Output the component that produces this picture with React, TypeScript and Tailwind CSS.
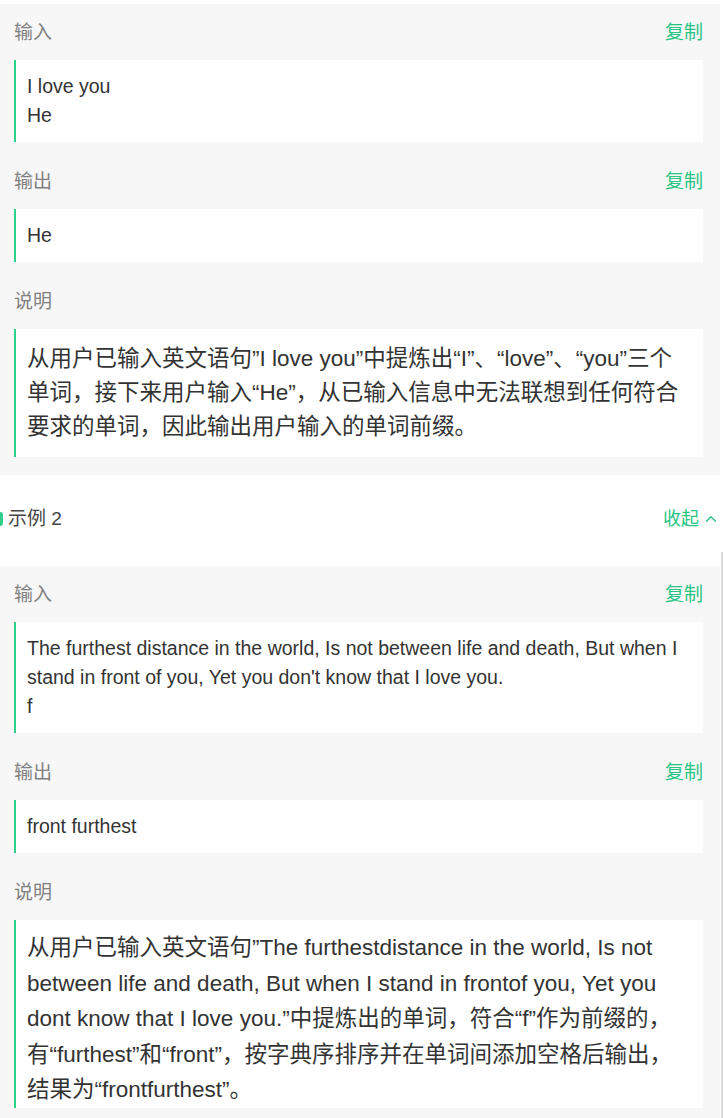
import React from "react";
import { ChevronUp } from "lucide-react";

const font = { fontFamily: "'Liberation Sans', 'Noto Sans CJK SC', sans-serif" };

function Label({ text }: { text: string }) {
  return (
    <div className="flex h-6 items-center justify-between">
      <span className="text-[19px] leading-6 text-[#808080]">{text}</span>
      <span className="text-[19px] leading-6 text-[#27c484]">复制</span>
    </div>
  );
}

function Box({ children, variant }: { children: React.ReactNode; variant?: "big" | "big2" }) {
  const size =
    variant === "big"
      ? "py-[13px] text-[22.5px] leading-[34px]"
      : variant === "big2"
        ? "pt-[10px] pb-0 text-[22.5px] leading-[35.5px]"
        : "py-[12px] text-[19.5px] leading-[29px]";
  return (
    <div className={"mt-[15px] border-l-2 border-[#2fd08c] bg-white pl-[11px] pr-3 text-[#333] " + size}>
      {children}
    </div>
  );
}

function Block({
  input,
  output,
  desc,
  variant,
}: {
  input: React.ReactNode;
  output: React.ReactNode;
  desc: React.ReactNode;
  variant: "big" | "big2";
}) {
  return (
    <div className="w-[720px] bg-[#f7f7f7] pb-[18px] pl-[14px] pr-[17px] pt-[17px]">
      <Label text="输入" />
      <Box>{input}</Box>
      <div className="mt-[28px]">
        <Label text="输出" />
      </div>
      <Box>{output}</Box>
      <div className="mt-[28px] flex h-6 items-center">
        <span className="text-[19px] leading-6 text-[#808080]">说明</span>
      </div>
      <Box variant={variant}>{desc}</Box>
    </div>
  );
}

export default function App() {
  return (
    <div className="relative min-h-[1118px] w-[723px] overflow-hidden bg-white pt-[4px]" style={font}>
      <Block
        variant="big"
        input={
          <>
            I love you
            <br />
            He
          </>
        }
        output={<>He</>}
        desc={
          <>
            从用户已输入英文语句”I love you”中提炼出“I”、“love”、“you”三个
            <br />
            单词，接下来用户输入“He”，从已输入信息中无法联想到任何符合
            <br />
            要求的单词，因此输出用户输入的单词前缀。
          </>
        }
      />

      <div className="mb-[35px] mt-[32px] flex h-6 items-center justify-between pr-[3px]">
        <div className="flex items-center">
          <div className="h-[14px] w-[3px] rounded-r-sm bg-[#2fd08c]" />
          <span className="ml-[5px] text-[19px] leading-6 text-[#444]">示例 2</span>
        </div>
        <div className="flex items-center text-[#27c484]">
          <span className="text-[18px] leading-6">收起</span>
          <ChevronUp className="ml-[3px] h-[18px] w-[18px]" strokeWidth={1.8} />
        </div>
      </div>

      <Block
        variant="big2"
        input={
          <>
            The furthest distance in the world, Is not between life and death, But when I
            <br />
            stand in front of you, Yet you don't know that I love you.
            <br />f
          </>
        }
        output={<>front furthest</>}
        desc={
          <>
            从用户已输入英文语句”The furthestdistance in the world, Is not
            <br />
            between life and death, But when I stand in frontof you, Yet you
            <br />
            dont know that I love you.”中提炼出的单词，符合“f”作为前缀的，
            <br />
            有“furthest”和“front”，按字典序排序并在单词间添加空格后输出，
            <br />
            结果为“frontfurthest”。
          </>
        }
      />

      <div className="absolute bottom-0 right-0 top-[552px] w-[2px] bg-[#dcdcdc]" />
    </div>
  );
}
